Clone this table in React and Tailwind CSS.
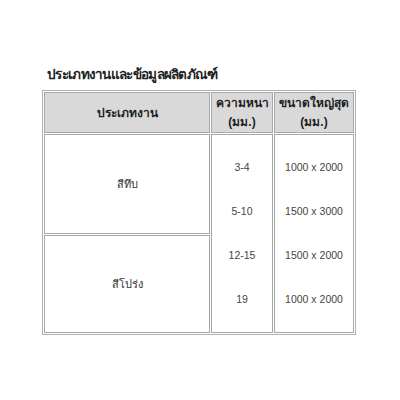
export default function App() {
  const cellB = "border border-[#a8a8a8]";
  return (
    <div className="w-[400px] h-[400px] bg-white pl-[42px] pt-[64px]" style={{ fontFamily: '"Liberation Sans", "Noto Sans", sans-serif' }}>
      <div className="pl-[5px] h-[26px] text-[13.5px] font-bold text-[#222] leading-[22px] tracking-[-0.7px]">ประเภทงานและข้อมูลผลิตภัณฑ์</div>
      <table className="border border-[#b0b0b0] border-separate border-spacing-[1px] table-fixed w-[313px]">
        <colgroup>
          <col className="w-[166px]" />
          <col className="w-[62px]" />
          <col className="w-[80px]" />
        </colgroup>
        <thead>
          <tr>
            <th className={`${cellB} bg-[#d9d9d9] h-[41px] text-[12px] font-bold text-[#222] text-center align-middle p-0`}>ประเภทงาน</th>
            <th className={`${cellB} bg-[#d9d9d9] h-[41px] text-[12px] font-bold text-[#222] text-center align-middle p-0 leading-[19px]`}>
              <div>ความหนา</div>
              <div>(มม.)</div>
            </th>
            <th className={`${cellB} bg-[#d9d9d9] h-[41px] text-[12px] font-bold text-[#222] text-center align-middle p-0 leading-[19px]`}>
              <div>ขนาดใหญ่สุด</div>
              <div>(มม.)</div>
            </th>
          </tr>
        </thead>
        <tbody>
          <tr>
            <td className={`${cellB} h-[100px] text-[11px] text-[#333] text-center align-middle p-0`}>สีทึบ</td>
            <td rowSpan={2} className={`${cellB} text-[10.5px] text-[#444] text-center align-middle p-0`}>
              <div className="flex flex-col">
                <div className="h-[44px] flex items-center justify-center">3-4</div>
                <div className="h-[44px] flex items-center justify-center">5-10</div>
                <div className="h-[44px] flex items-center justify-center">12-15</div>
                <div className="h-[44px] flex items-center justify-center">19</div>
              </div>
            </td>
            <td rowSpan={2} className={`${cellB} text-[10.5px] text-[#444] text-center align-middle p-0`}>
              <div className="flex flex-col">
                <div className="h-[44px] flex items-center justify-center">1000 x 2000</div>
                <div className="h-[44px] flex items-center justify-center">1500 x 3000</div>
                <div className="h-[44px] flex items-center justify-center">1500 x 2000</div>
                <div className="h-[44px] flex items-center justify-center">1000 x 2000</div>
              </div>
            </td>
          </tr>
          <tr>
            <td className={`${cellB} h-[98px] text-[11px] text-[#333] text-center align-middle p-0`}>สีโปร่ง</td>
          </tr>
        </tbody>
      </table>
    </div>
  );
}
